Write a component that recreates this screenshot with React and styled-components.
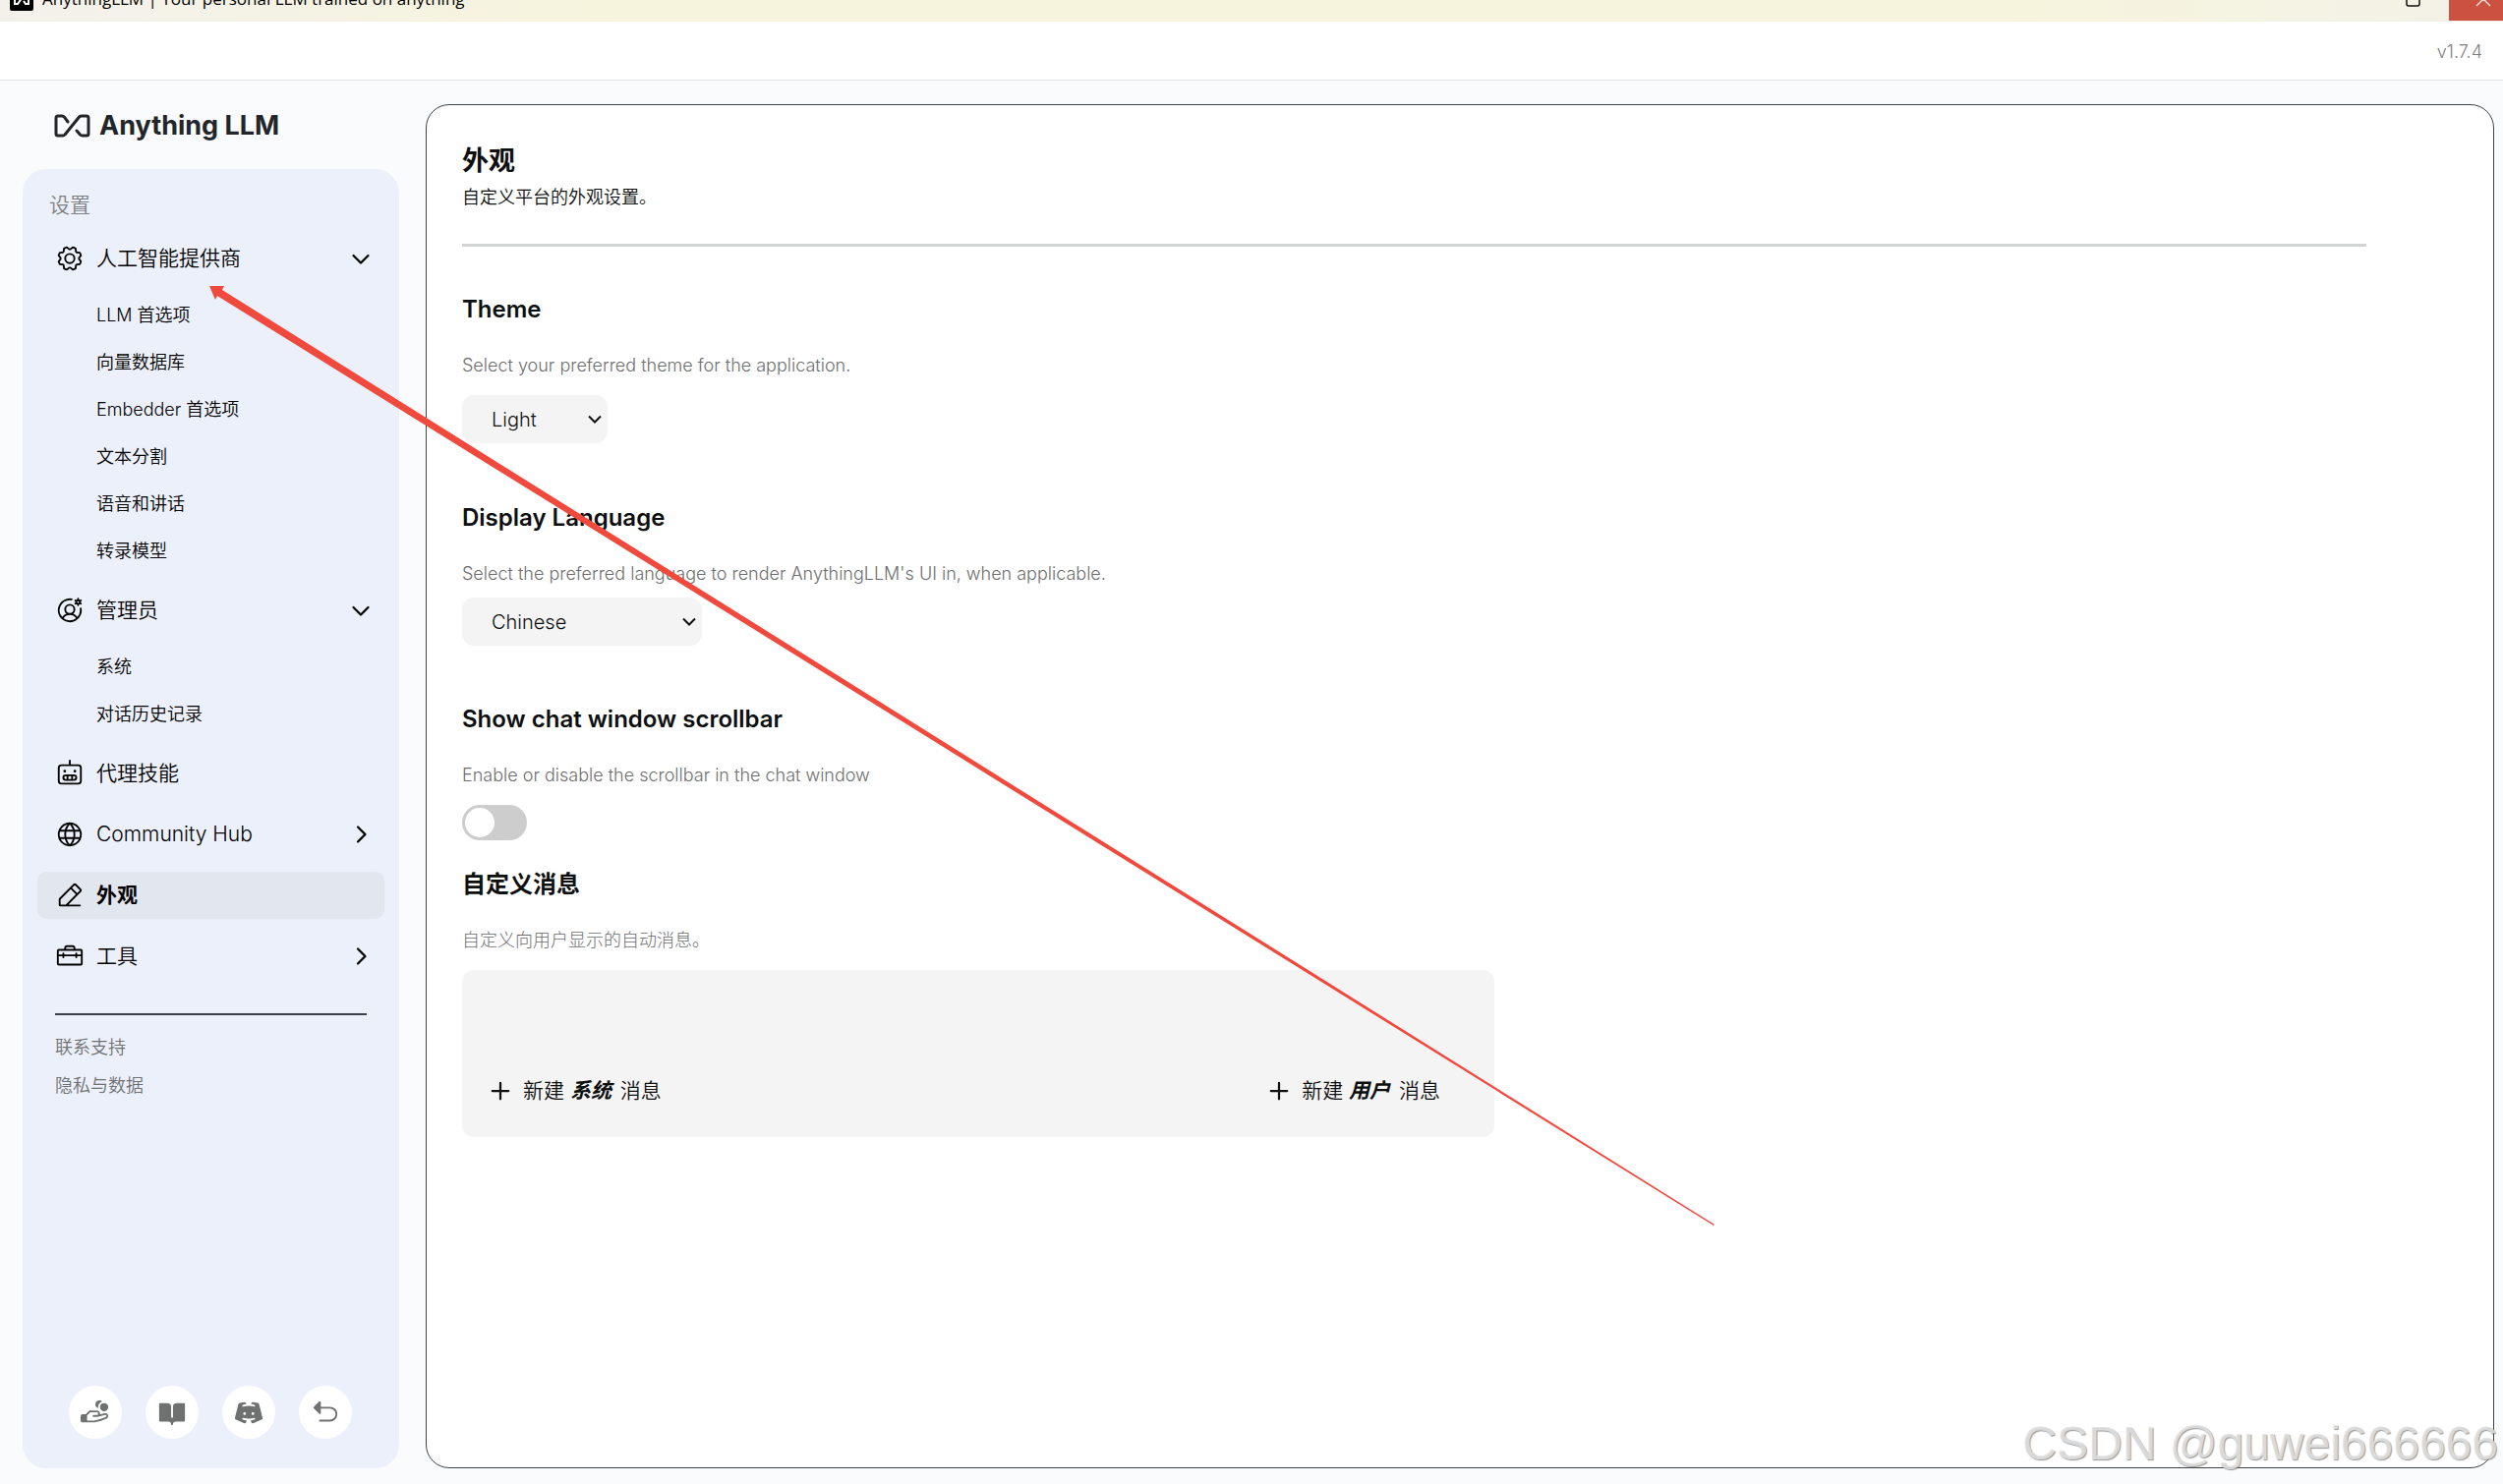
import { useState } from "react";
import styled, { createGlobalStyle, css } from "styled-components";
import {
  PiArrowUUpLeftFill,
  PiBookOpenFill,
  PiCaretDownBold,
  PiCaretRightBold,
  PiDiscordLogoFill,
  PiGear,
  PiGlobe,
  PiHandCoinsFill,
  PiPencilSimpleLine,
  PiPlusBold,
  PiRobot,
  PiToolbox,
  PiUserCircleGear,
} from "react-icons/pi";

const GlobalStyle = createGlobalStyle`
  * {
    box-sizing: border-box;
  }

  body {
    margin: 0;
    background: #fafbfd;
    color: #0e0f0f;
    font-family: Inter, "Noto Sans CJK SC", sans-serif;
    font-size: 21px;
    font-weight: 350;
    line-height: 30px;
  }

  button, select, input {
    font: inherit;
    color: inherit;
  }

  h1, h2, p, ul {
    margin: 0;
    padding: 0;
  }
`;

const Page = styled.div`
  position: relative;
  display: flex;
  flex-direction: column;
  min-height: 100vh;
  overflow: hidden;
`;

// window chrome
const TitleBar = styled.div`
  display: flex;
  align-items: flex-end;
  height: 22px;
  overflow: hidden;
  background: linear-gradient(90deg, #f4f1ec, #f6f4dc 25%, #f6f4dc 80%, #f4f2e6 97%, #f4f0ec);
`;

const WindowTitle = styled.div`
  display: flex;
  flex: 1;
  align-items: center;
  gap: 9px;
  height: 46px;
  padding-left: 10px;
  color: #000;
  font-family: "Open Sans", sans-serif;
  font-size: 17px;
  font-weight: 400;
`;

const WindowButton = styled.button`
  display: flex;
  align-items: center;
  width: 72px;
  height: 46px;
  padding: 0 0 0 28px;
  border: 0;
  background: transparent;
  color: #111;

  ${(props) =>
    props.$close &&
    css`
      width: 55px;
      padding-left: 27px;
      border-bottom: 1px solid #f4f0ec;
      background: #cc5140;
      color: #f3d9d5;
    `}
`;

const Header = styled.header`
  display: flex;
  align-items: center;
  justify-content: flex-end;
  height: 60px;
  padding: 2px 21px 0 24px;
  border-bottom: 1px solid #e5e7eb;
  background: #fff;
  color: #7d7f7f;
  font-size: 18px;
  font-weight: 300;
`;

const Body = styled.div`
  display: grid;
  flex: 1;
  grid-template-columns: 383px 1fr;
  column-gap: 27px;
  padding: 0 9px 16px 23px;
`;

// sidebar
const Sidebar = styled.aside`
  display: flex;
  flex-direction: column;
`;

const Logo = styled.a`
  display: flex;
  align-items: center;
  gap: 9px;
  height: 90px;
  padding: 2px 0 0 32px;
  color: #222628;
  font-size: 27px;
  font-weight: 700;
  text-decoration: none;
`;

const Panel = styled.div`
  display: flex;
  flex: 1;
  flex-direction: column;
  padding: 22px 15px 30px;
  border-radius: 24px;
  background: #ecf0fa;
`;

const PanelTitle = styled.p`
  margin-bottom: 15px;
  padding-left: 12px;
  color: #7d7f81;
`;

const Menu = styled.ul`
  display: flex;
  flex-direction: column;
  gap: 14px;
  list-style: none;
`;

const MenuLink = styled.a`
  display: flex;
  align-items: center;
  gap: 12px;
  height: 48px;
  padding: 0 12px 0 18px;
  border-radius: 9px;
  background: ${(props) => (props.$active ? "#e2e6ee" : "transparent")};
  color: #000;
  font-weight: ${(props) => (props.$active ? 700 : 350)};
  text-decoration: none;

  span {
    flex: 1;
  }
`;

const SubMenu = styled.ul`
  margin: 9px 0 -1px;
  list-style: none;
`;

const SubLink = styled.a`
  display: flex;
  align-items: center;
  height: 48px;
  padding: 2px 0 0 60px;
  color: #000;
  font-size: 18px;
  text-decoration: none;
`;

const Divider = styled.hr`
  width: 317px;
  margin: 34px 18px 13px;
  border: 0;
  border-top: 2px solid #3f3f48;
`;

const SupportLink = styled.a`
  height: 39px;
  padding-left: 18px;
  color: #6f7173;
  font-size: 18px;
  line-height: 39px;
  text-decoration: none;
`;

const Footer = styled.div`
  display: flex;
  justify-content: center;
  gap: 24px;
  margin-top: auto;
  padding-right: 1px;
`;

const RoundLink = styled.a`
  display: grid;
  place-items: center;
  width: 54px;
  height: 54px;
  border-radius: 50%;
  background: #fff;
  color: #6f7170;
`;

// settings
const Main = styled.main`
  margin-top: 24px;
  padding: 42px 129px 40px 36px;
  border: 1px solid #404246;
  border-radius: 24px;
  background: #fff;
`;

const PageHead = styled.div`
  padding-bottom: 32px;
  border-bottom: 3px solid #d3d5d5;
`;

const PageTitle = styled.h1`
  font-size: 27px;
  line-height: 30px;
`;

const PageText = styled.p`
  margin-top: 7px;
  font-size: 18px;
`;

const Section = styled.section`
  display: flex;
  flex-direction: column;
  align-items: flex-start;
  margin-top: ${(props) => props.$gap}px;
`;

const SectionTitle = styled.h2`
  font-size: 24px;
  font-weight: 600;
  line-height: 36px;
`;

const SectionText = styled.p`
  margin-top: 24px;
  color: #6c6e6e;
  font-size: 18px;
  font-weight: 300;
`;

const SelectWrap = styled.div`
  position: relative;
  width: ${(props) => props.$width}px;
  margin-top: ${(props) => props.$gap}px;

  svg {
    position: absolute;
    top: 20px;
    right: 6px;
    pointer-events: none;
  }
`;

const Select = styled.select`
  appearance: none;
  width: 100%;
  height: 49px;
  padding: 0 30px;
  border: 0;
  border-radius: 12px;
  background: #f4f4f4;
  font-size: 20px;
`;

const Toggle = styled.input`
  appearance: none;
  width: 66px;
  height: 36px;
  margin: 15px 0 0;
  padding: 3px;
  border-radius: 18px;
  background: ${(props) => (props.checked ? "#46c8ff" : "#cdcdcd")};

  &::before {
    content: "";
    display: block;
    width: 30px;
    height: 30px;
    margin-left: ${(props) => (props.checked ? 30 : 0)}px;
    border-radius: 50%;
    background: #fff;
  }
`;

const Messages = styled.div`
  display: flex;
  align-items: flex-end;
  justify-content: space-between;
  width: 1050px;
  max-width: 100%;
  height: 170px;
  margin-top: 15px;
  padding: 0 55px 32px 27px;
  border-radius: 12px;
  background: #f4f4f4;
`;

const AddButton = styled.button`
  display: flex;
  align-items: center;
  gap: 11px;
  padding: 0;
  border: 0;
  background: transparent;

  em {
    margin-right: 3px;
    font-weight: 700;
  }
`;

// overlays
const Arrow = styled.svg`
  position: absolute;
  top: 0;
  left: 0;
  pointer-events: none;
`;

const Watermark = styled.div`
  position: absolute;
  right: 5px;
  bottom: 13px;
  color: rgba(226, 226, 226, 0.9);
  font-family: "Liberation Sans", sans-serif;
  font-size: 48px;
  font-weight: 400;
  line-height: 56px;
  text-shadow: 1px 1px 1px rgba(110, 110, 110, 0.7);
  pointer-events: none;
`;

const menu = [
  {
    label: "人工智能提供商",
    icon: PiGear,
    open: true,
    children: ["LLM 首选项", "向量数据库", "Embedder 首选项", "文本分割", "语音和讲话", "转录模型"],
  },
  { label: "管理员", icon: PiUserCircleGear, open: true, children: ["系统", "对话历史记录"] },
  { label: "代理技能", icon: PiRobot },
  { label: "Community Hub", icon: PiGlobe, closed: true },
  { label: "外观", icon: PiPencilSimpleLine, active: true },
  { label: "工具", icon: PiToolbox, closed: true },
];

const links = [
  { label: "Sponsor", icon: PiHandCoinsFill },
  { label: "Docs", icon: PiBookOpenFill },
  { label: "Discord", icon: PiDiscordLogoFill },
  { label: "Back", icon: PiArrowUUpLeftFill },
];

function LoopMark() {
  return (
    <svg
      width="37"
      height="24"
      viewBox="0 0 37 24"
      fill="none"
      stroke="currentColor"
      strokeWidth="3"
      strokeLinecap="round"
      strokeLinejoin="round"
    >
      <path d="M14 8 10.5 3.2Q9.5 2 8 2H4Q2 2 2 4V20Q2 22 4 22H9Q10 22 11 21L25.5 3Q26.5 2 28 2H33Q35 2 35 4V20Q35 22 33 22H29Q27.5 22 26.5 21L23 17" />
    </svg>
  );
}

function SelectBox({ id, width, gap, options }) {
  return (
    <SelectWrap $width={width} $gap={gap}>
      <Select id={id}>
        {options.map((option) => (
          <option key={option}>{option}</option>
        ))}
      </Select>
      <svg width="14" height="10" viewBox="0 0 14 10" fill="none" stroke="#111" strokeWidth="2">
        <path d="M1 1.5 7 7.5 13 1.5" />
      </svg>
    </SelectWrap>
  );
}

function MenuItem({ item }) {
  const Icon = item.icon;
  return (
    <li>
      <MenuLink href="#" $active={item.active}>
        <Icon size={30} />
        <span>{item.label}</span>
        {item.open && <PiCaretDownBold size={24} />}
        {item.closed && <PiCaretRightBold size={24} />}
      </MenuLink>
      {item.children && (
        <SubMenu>
          {item.children.map((child) => (
            <li key={child}>
              <SubLink href="#">{child}</SubLink>
            </li>
          ))}
        </SubMenu>
      )}
    </li>
  );
}

export default function App() {
  const [scrollbar, setScrollbar] = useState(false);

  return (
    <Page>
      <GlobalStyle />
      <TitleBar>
        <WindowTitle>
          <svg width="24" height="24" viewBox="0 0 24 24">
            <rect width="24" height="24" rx="2" />
            <path
              d="M10 10 8 7H5V17H8L15 7H19V17H16L14 14"
              fill="none"
              stroke="#fff"
              strokeWidth="2"
            />
          </svg>
          AnythingLLM | Your personal LLM trained on anything
        </WindowTitle>
        <WindowButton aria-label="Maximize">
          <svg width="15" height="15" viewBox="0 0 15 15" fill="none" stroke="currentColor" strokeWidth="1.5">
            <rect x="1" y="1" width="13" height="13" rx="2" />
          </svg>
        </WindowButton>
        <WindowButton $close aria-label="Close">
          <svg width="16" height="16" viewBox="0 0 16 16" fill="none" stroke="currentColor" strokeWidth="1.5">
            <path d="M1 1 15 15M15 1 1 15" />
          </svg>
        </WindowButton>
      </TitleBar>

      <Header>v1.7.4</Header>

      <Body>
        <Sidebar>
          <Logo href="#">
            <LoopMark />
            Anything LLM
          </Logo>
          <Panel>
            <PanelTitle>设置</PanelTitle>
            <Menu>
              {menu.map((item) => (
                <MenuItem key={item.label} item={item} />
              ))}
            </Menu>
            <Divider />
            <SupportLink href="#">联系支持</SupportLink>
            <SupportLink href="#">隐私与数据</SupportLink>
            <Footer>
              {links.map(({ label, icon: Icon }) => (
                <RoundLink key={label} href="#" aria-label={label}>
                  <Icon size={30} />
                </RoundLink>
              ))}
            </Footer>
          </Panel>
        </Sidebar>

        <Main>
          <PageHead>
            <PageTitle>外观</PageTitle>
            <PageText>自定义平台的外观设置。</PageText>
          </PageHead>

          <Section $gap={46}>
            <SectionTitle as="label" htmlFor="theme">
              Theme
            </SectionTitle>
            <SectionText>Select your preferred theme for the application.</SectionText>
            <SelectBox id="theme" width={148} gap={15} options={["Light", "Default"]} />
          </Section>

          <Section $gap={58}>
            <SectionTitle as="label" htmlFor="language">
              Display Language
            </SectionTitle>
            <SectionText>
              Select the preferred language to render AnythingLLM's UI in, when applicable.
            </SectionText>
            <SelectBox id="language" width={244} gap={9} options={["Chinese", "English"]} />
          </Section>

          <Section $gap={57}>
            <SectionTitle as="label" htmlFor="scrollbar">
              Show chat window scrollbar
            </SectionTitle>
            <SectionText>Enable or disable the scrollbar in the chat window</SectionText>
            <Toggle
              id="scrollbar"
              type="checkbox"
              checked={scrollbar}
              onChange={(e) => setScrollbar(e.target.checked)}
            />
          </Section>

          <Section $gap={27}>
            <SectionTitle>自定义消息</SectionTitle>
            <SectionText>自定义向用户显示的自动消息。</SectionText>
            <Messages>
              <AddButton>
                <PiPlusBold size={24} />
                <span>
                  新建 <em>系统</em> 消息
                </span>
              </AddButton>
              <AddButton>
                <PiPlusBold size={24} />
                <span>
                  新建 <em>用户</em> 消息
                </span>
              </AddButton>
            </Messages>
          </Section>
        </Main>
      </Body>

      <Arrow width="1760" height="1260" viewBox="0 0 1760 1260" fill="#f04a3e">
        <path d="M213 291H228L226 295 1744 1246 1743 1247 221 301 219 305Z" />
      </Arrow>
      <Watermark>CSDN @guwei666666</Watermark>
    </Page>
  );
}
